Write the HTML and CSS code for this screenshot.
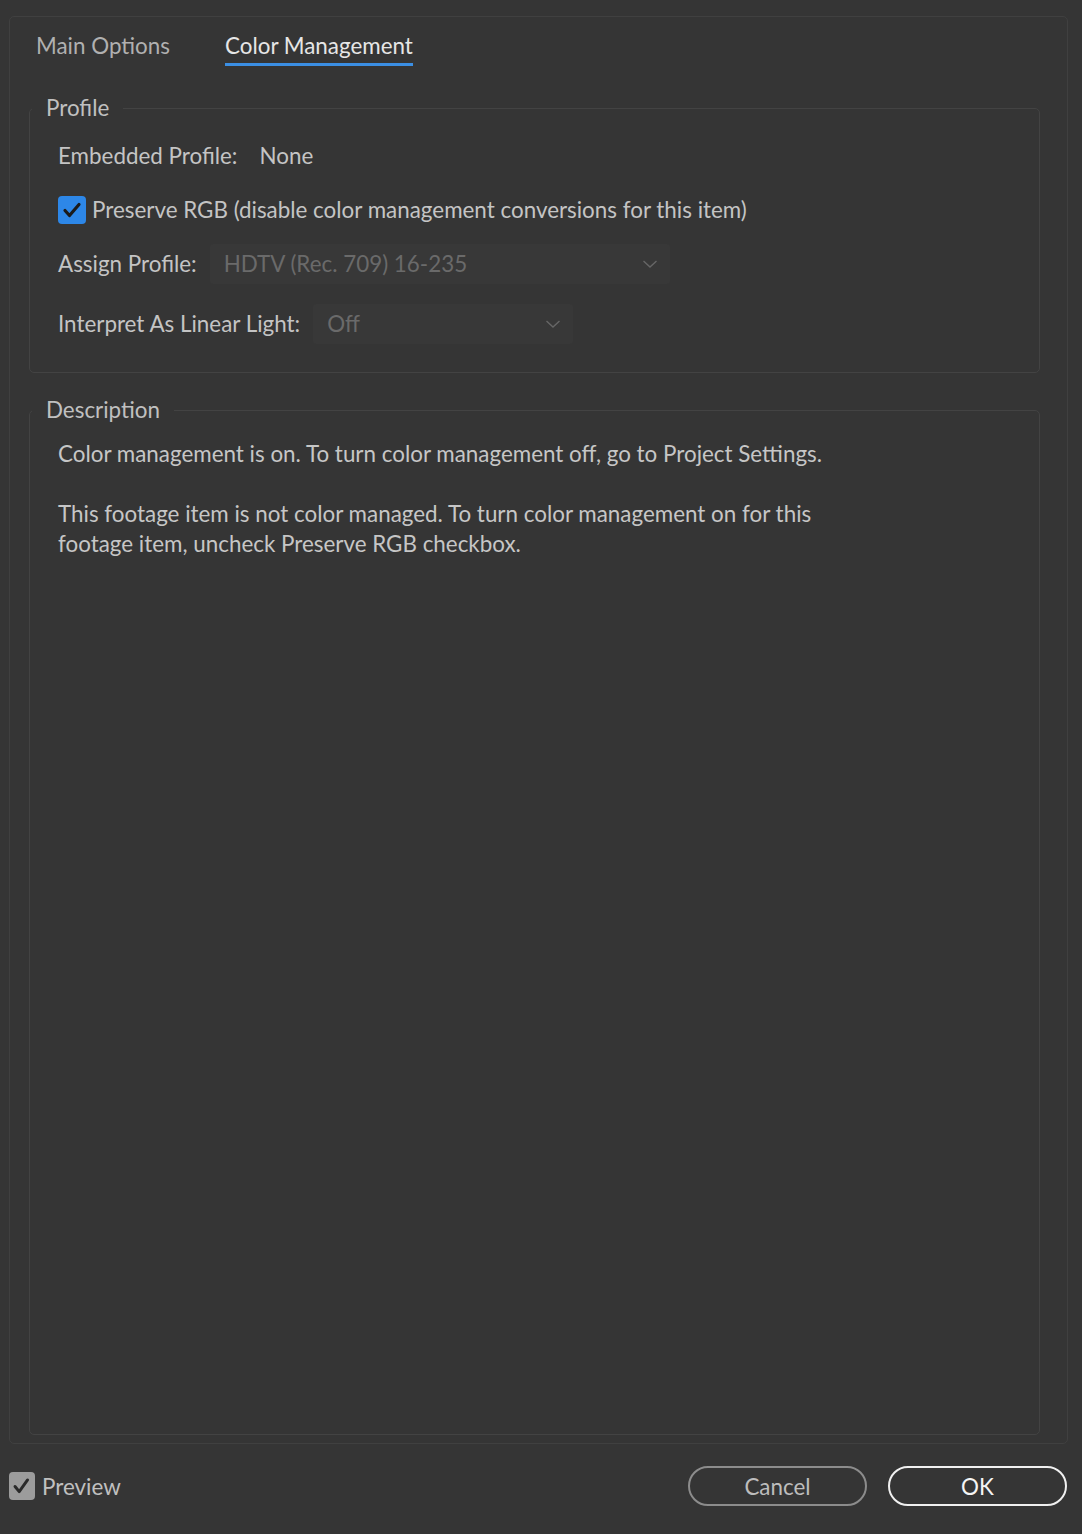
FILE: index.html
```html
<!DOCTYPE html>
<html>
<head>
  <title>Interpret Footage</title>
  <link rel="stylesheet" href="styles.css">
</head>
<body>
  <div class="panel">
    <div class="tabs">
      <span class="tab">Main Options</span>
      <span class="tab active">Color Management</span>
    </div>

    <fieldset class="group">
      <legend>Profile</legend>
      <div class="row embedded">
        <span class="label">Embedded Profile:</span>
        <span class="value">None</span>
      </div>
      <div class="row check-row">
        <span class="checkbox checked">
          <svg viewBox="0 0 28 28" width="28" height="28"><path d="M7 14.5l4.5 5L21 8.5" fill="none" stroke="#1b1b1b" stroke-width="3.2" stroke-linecap="round" stroke-linejoin="round"/></svg>
        </span>
        <span class="label">Preserve RGB (disable color management conversions for this item)</span>
      </div>
      <div class="row select-row">
        <span class="label">Assign Profile:</span>
        <div class="select wide">
          <span>HDTV (Rec. 709) 16-235</span>
          <svg viewBox="0 0 16 10" width="16" height="10"><path d="M1.5 2l6.5 6 6.5-6" fill="none" stroke="#666" stroke-width="1.4"/></svg>
        </div>
      </div>
      <div class="row select-row second">
        <span class="label">Interpret As Linear Light:</span>
        <div class="select narrow">
          <span>Off</span>
          <svg viewBox="0 0 16 10" width="16" height="10"><path d="M1.5 2l6.5 6 6.5-6" fill="none" stroke="#666" stroke-width="1.4"/></svg>
        </div>
      </div>
    </fieldset>

    <fieldset class="group description">
      <legend>Description</legend>
      <p>Color management is on. To turn color management off, go to Project Settings.</p>
      <p>This footage item is not color managed. To turn color management on for this<br>footage item, uncheck Preserve RGB checkbox.</p>
    </fieldset>
  </div><!--panel-->

  <div class="footer">
    <div class="preview">
      <span class="checkbox grey">
        <svg viewBox="0 0 28 28" width="26" height="28"><path d="M6.5 14.5l4.5 5.5L20 7.5" fill="none" stroke="#2a2a2a" stroke-width="3.2" stroke-linecap="round" stroke-linejoin="round"/></svg>
      </span>
      <span class="label">Preview</span>
    </div>
    <div class="buttons">
      <button class="btn cancel">Cancel</button>
      <button class="btn ok">OK</button>
    </div>
  </div>
</body>
</html>
```

FILE: styles.css
```css
  html, body {
    margin: 0;
    padding: 0;
    background-color: #353535;
    color: #c4c4c4;
    font-family: "Lato", "Open Sans", sans-serif;
    font-size: 22.4px;
  }
  body {
    padding: 16px 14px 0 9px;
    height: 1534px;
    box-sizing: border-box;
  }
  .panel {
    height: 1428px;
    box-sizing: border-box;
    border: 1px solid #404040;
    border-radius: 5px;
    padding: 0 27px 8px 19px;
    display: flex;
    flex-direction: column;
  }
  .tabs {
    display: flex;
    gap: 55px;
    padding-left: 7px;
    margin-bottom: 27px;
  }
  .tab {
    padding-top: 14px;
    line-height: 30px;
    padding-bottom: 2px;
    border-bottom: 3px solid transparent;
    color: #b0b0b0;
  }
  .tab.active {
    color: #e6e6e6;
    border-bottom-color: #3b8fe4;
  }
  .group {
    margin: 0;
    border: 1px solid #434343;
    border-radius: 5px;
    padding: 18px 28px 28px 28px;
  }
  .group legend {
    margin-left: -26px;
    padding: 0 14px;
    line-height: 30px;
    color: #c0c0c0;
  }
  .row {
    display: flex;
    align-items: center;
    line-height: 30px;
  }
  .embedded .value {
    margin-left: 22px;
  }
  .check-row {
    margin-top: 24px;
  }
  .checkbox {
    width: 28px;
    height: 28px;
    border-radius: 4px;
    display: flex;
    align-items: center;
    justify-content: center;
    flex-shrink: 0;
  }
  .checkbox.checked {
    background-color: #2d87e8;
  }
  .check-row .label {
    margin-left: 6px;
  }
  .select-row {
    margin-top: 19px;
  }
  .select-row.second {
    margin-top: 20px;
  }
  .select {
    height: 40px;
    box-sizing: border-box;
    margin-left: 13px;
    padding: 0 12px 0 14px;
    background-color: #383838;
    border-radius: 3px;
    display: flex;
    align-items: center;
    justify-content: space-between;
    color: #6a6a6a;
  }
  .select.wide {
    width: 460px;
  }
  .select.narrow {
    width: 260px;
  }
  .description {
    flex: 1;
    margin-top: 22px;
    padding-top: 14px;
  }
  .description p {
    margin: 0 0 30px 0;
    line-height: 30px;
    color: #c6c6c6;
  }
  .footer {
    display: flex;
    align-items: center;
    justify-content: space-between;
    padding: 22px 1px 0 0;
  }
  .preview {
    display: flex;
    align-items: center;
  }
  .checkbox.grey {
    width: 26px;
    background-color: #9c9c9c;
  }
  .preview .label {
    margin-left: 7px;
    color: #c0c0c0;
  }
  .buttons {
    display: flex;
    gap: 21px;
  }
  .btn {
    width: 179px;
    height: 40px;
    border-radius: 20px;
    background: transparent;
    font-family: inherit;
    font-size: 22.4px;
    padding: 0;
  }
  .btn.cancel {
    border: 2px solid #8c8c8c;
    color: #bdbdbd;
  }
  .btn.ok {
    border: 2px solid #f0f0f0;
    color: #f4f4f4;
  }
```
